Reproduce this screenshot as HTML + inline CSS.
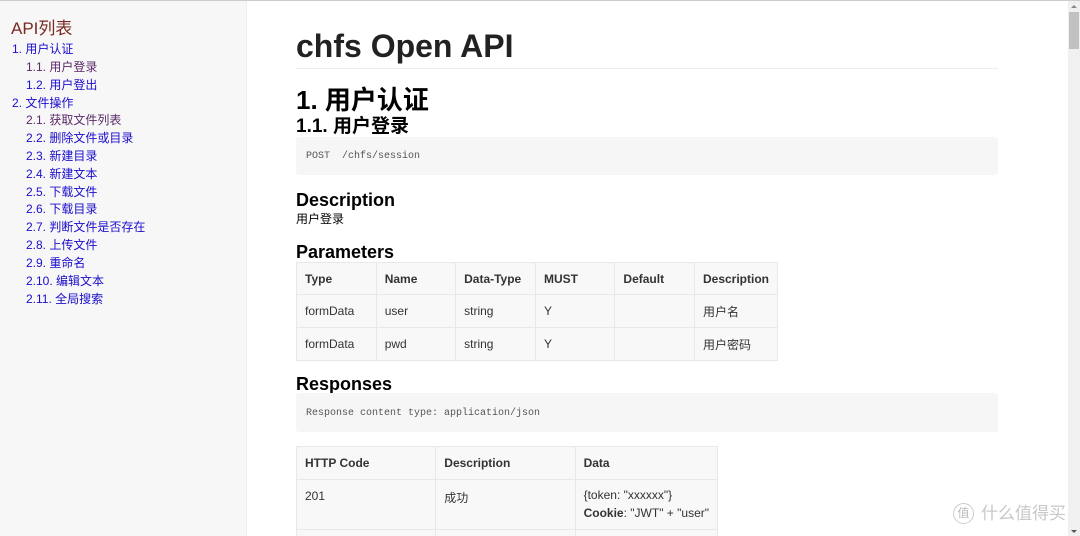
<!DOCTYPE html>
<html style="width:1080px;height:536px;overflow:hidden"><head><meta charset="utf-8"><style>
*{margin:0;padding:0;box-sizing:border-box}
body{width:1080px;height:536px;overflow:hidden;background:#fff;font-family:"Liberation Sans","Noto Sans CJK SC",sans-serif;color:#333;position:relative}
.a{position:absolute;white-space:nowrap}
#top{left:0;top:0;width:1080px;height:1px;background:#ccc}
#side{left:0;top:1px;width:247px;height:535px;background:#f7f7f7;border-right:1px solid #eee}
.l{position:absolute;font-size:12px;color:#1a0dcc;line-height:16px}
.l2{left:26px}.l1{left:12px}
.pre{background:#f6f6f6;border-radius:3px;font-family:"Liberation Mono",monospace;font-size:10px;color:#555;padding-left:10px}
table{position:absolute;border-collapse:collapse;font-size:12px;color:#333}
td,th{border:1px solid #e8e8e8;background:#f8f8f8;text-align:left;padding:0 8px;vertical-align:middle;white-space:nowrap}
th{font-weight:bold}
#sb{left:1068px;top:1px;width:12px;height:535px;background:#f0f0f0}
</style></head><body>
<div class="a" id="top"></div>
<div class="a" id="side">
<div class="a" style="left:11px;top:13px;font-size:17px;color:#7a2a22">API列表</div>
<div class="l l1" style="top:40px">1. 用户认证</div>
<div class="l l2" style="top:58px;color:#5a2a6a">1.1. 用户登录</div>
<div class="l l2" style="top:76px">1.2. 用户登出</div>
<div class="l l1" style="top:94px">2. 文件操作</div>
<div class="l l2" style="top:111px;color:#5a2a6a">2.1. 获取文件列表</div>
<div class="l l2" style="top:129px">2.2. 删除文件或目录</div>
<div class="l l2" style="top:147px">2.3. 新建目录</div>
<div class="l l2" style="top:165px">2.4. 新建文本</div>
<div class="l l2" style="top:183px">2.5. 下载文件</div>
<div class="l l2" style="top:200px">2.6. 下载目录</div>
<div class="l l2" style="top:218px">2.7. 判断文件是否存在</div>
<div class="l l2" style="top:236px">2.8. 上传文件</div>
<div class="l l2" style="top:254px">2.9. 重命名</div>
<div class="l l2" style="top:272px">2.10. 编辑文本</div>
<div class="l l2" style="top:290px">2.11. 全局搜索</div>
</div>
<div class="a" style="left:296px;top:26px;font-size:32px;font-weight:bold;color:#222;line-height:40px">chfs Open API</div>
<div class="a" style="left:296px;top:68px;width:702px;height:1px;background:#eee"></div>
<div class="a" style="left:296px;top:84px;font-size:26px;font-weight:bold;color:#000;line-height:32px">1. 用户认证</div>
<div class="a" style="left:296px;top:115px;font-size:19px;font-weight:bold;color:#000;line-height:24px">1.1. 用户登录</div>
<div class="a pre" style="left:296px;top:137px;width:702px;height:38px;line-height:40px">POST&nbsp; /chfs/session</div>
<div class="a" style="left:296px;top:189px;font-size:18px;font-weight:bold;color:#000;line-height:22px">Description</div>
<div class="a" style="left:296px;top:211px;font-size:12px;color:#000;line-height:16px">用户登录</div>
<div class="a" style="left:296px;top:241px;font-size:18px;font-weight:bold;color:#000;line-height:22px">Parameters</div>
<table style="left:296px;top:262px;width:482px">
<tr style="height:32px"><th style="width:80px">Type</th><th style="width:80px">Name</th><th style="width:80px">Data-Type</th><th style="width:80px">MUST</th><th style="width:80px">Default</th><th>Description</th></tr>
<tr style="height:33px"><td>formData</td><td>user</td><td>string</td><td>Y</td><td></td><td>用户名</td></tr>
<tr style="height:33px"><td>formData</td><td>pwd</td><td>string</td><td>Y</td><td></td><td>用户密码</td></tr>
</table>
<div class="a" style="left:296px;top:373px;font-size:18px;font-weight:bold;color:#000;line-height:22px">Responses</div>
<div class="a pre" style="left:296px;top:393px;width:702px;height:39px;line-height:41px">Response content type: application/json</div>
<table style="left:296px;top:446px;width:422px">
<tr style="height:33px"><th style="width:140px">HTTP Code</th><th style="width:140px">Description</th><th>Data</th></tr>
<tr style="height:50px"><td style="vertical-align:top;padding-top:9px">201</td><td style="vertical-align:top;padding-top:9px">成功</td><td style="line-height:18px;padding-top:6px;vertical-align:top">{token: "xxxxxx"}<br><b>Cookie</b>: "JWT" + "user"</td></tr>
<tr style="height:20px"><td></td><td></td><td></td></tr>
</table>
<div class="a" style="left:953px;top:503px;width:21px;height:21px;border:1px solid #ccc;border-radius:50%;font-size:12px;color:#bbb;text-align:center;line-height:19px;background:#fff">值</div>
<div class="a" style="left:981px;top:503px;font-size:17px;color:#c8c8c8;line-height:22px">什么值得买</div>
<div class="a" id="sb"></div>
<div class="a" style="left:1069px;top:12px;width:10px;height:37px;background:#c1c1c1"></div>
<div class="a" style="left:1071px;top:5px;width:0;height:0;border-left:3px solid transparent;border-right:3px solid transparent;border-bottom:3px solid #888"></div>
<div class="a" style="left:1071px;top:530px;width:0;height:0;border-left:3px solid transparent;border-right:3px solid transparent;border-top:3px solid #555"></div>
</body></html>
